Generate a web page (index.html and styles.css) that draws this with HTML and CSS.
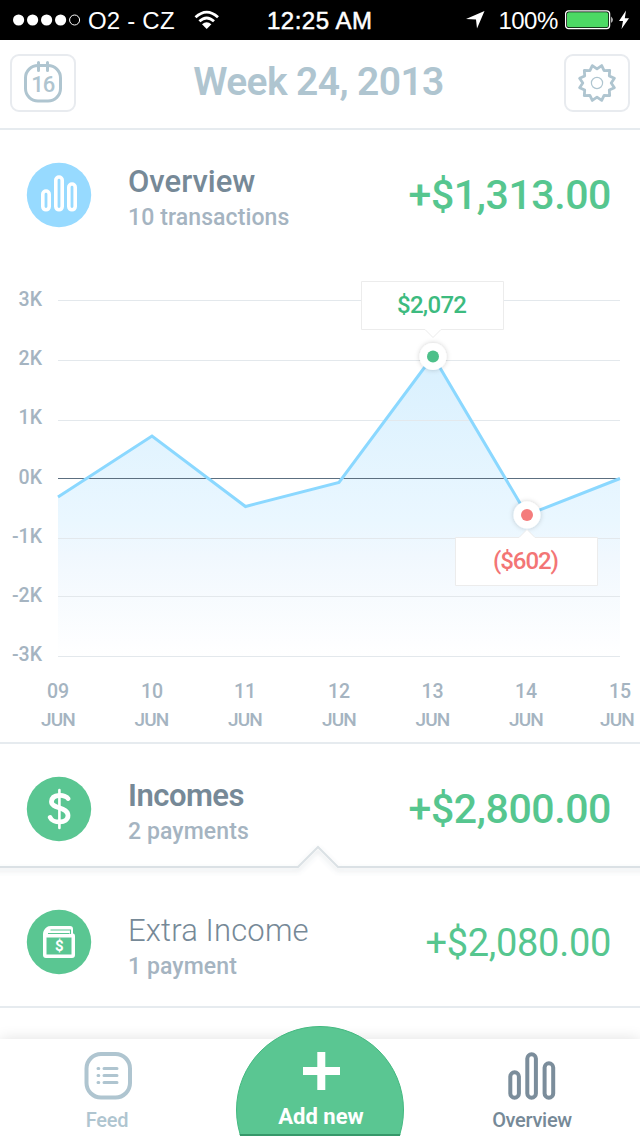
FILE: index.html
```html
<!DOCTYPE html>
<html lang="en">
<head>
<meta charset="utf-8">
<title>Week 24, 2013</title>
<link rel="stylesheet" href="styles.css">
</head>
<body>
<div class="status">
  <svg class="signal" width="68" height="12" viewBox="0 0 68 12"><g fill="#fff"><circle cx="5.6" cy="6" r="5.6"/><circle cx="19.6" cy="6" r="5.6"/><circle cx="33.6" cy="6" r="5.6"/><circle cx="47.6" cy="6" r="5.6"/></g><circle cx="61.6" cy="6" r="5" fill="none" stroke="#fff"/></svg>
  <span class="carrier">O2 - CZ</span>
  <svg class="wifi" width="26" height="20" viewBox="0 0 26 20"><g fill="none" stroke="#fff" stroke-width="2.8"><path d="M1.5 7.2Q12.7-3 24 7.2"/><path d="M5.4 11.3Q12.7 4.6 20 11.3"/></g><path d="M8 14.2Q12.7 10.2 17.4 14.2L12.7 19Z" fill="#fff"/></svg>
  <span class="clock">12:25 AM</span>
  <svg class="locate" width="20" height="20" viewBox="0 0 20 20"><path d="M18.5 1L11 18.5L10 9.5L0 9Z" fill="#fff"/></svg>
  <span class="percent">100%</span>
  <svg class="battery" width="65" height="20" viewBox="0 0 65 20"><rect x=".6" y=".8" width="44" height="17.8" rx="3" fill="none" stroke="#fff" stroke-width="1.3"/><rect x="2" y="2.2" width="41.2" height="15" rx="1.8" fill="#4cd964"/><path d="M46.3 6.5q2.8 3.3 0 6.6z" fill="#fff"/><path d="M61 .5L54 11h4L56.5 19L64 8.3h-4.2Z" fill="#fff"/></svg>
</div>

<header class="header">
  <div class="button">
    <svg width="40" height="44" viewBox="0 0 40 44" fill="none" stroke="#afc5d0" stroke-width="3"><rect x="2.5" y="4.500" width="35" height="35.500" rx="12.500"/><path d="M15.500 1.500v8M24.500 1.500v8" stroke-linecap="round"/><text class="date" x="19.700" y="31" text-anchor="middle">16</text></svg>
  </div>
  <h1 class="title">Week 24, 2013</h1>
  <div class="button">
    <svg width="40" height="40" viewBox="-20 -20 40 40" fill="none" stroke="#afc5d0"><path stroke-width="2.8" stroke-linejoin="round" d="M-4.7-17.4L0-14.2L4.7-17.4L7.1-12.3L12.7-12.7L12.3-7.1L17.4-4.7L14.2 0L17.4 4.7L12.3 7.1L12.7 12.7L7.1 12.3L4.7 17.4L0 14.2L-4.7 17.4L-7.1 12.3L-12.7 12.7L-12.3 7.1L-17.4 4.7L-14.2 0L-17.4-4.7L-12.3-7.1L-12.7-12.7L-7.1-12.3Z"/><circle r="5.6" stroke-width="1.2"/></svg>
  </div>
</header>

<main class="content">
  <section class="row overview">
    <svg class="badge" width="66" height="66" viewBox="0 0 66 66"><circle cx="33" cy="33" r="32.2" fill="#97daff"/><g fill="none" stroke="#fff" stroke-width="3.6"><rect x="16.8" y="29" width="6.4" height="18.8" rx="3.2"/><rect x="29.8" y="15" width="6.4" height="32.8" rx="3.2"/><rect x="42.8" y="22" width="6.4" height="25.8" rx="3.2"/></g></svg>
    <div class="info"><div class="name">Overview</div><div class="sub">10 transactions</div></div>
    <div class="amount">+$1,313.00</div>
  </section>

  <svg class="chart" width="640" height="484" viewBox="0 258 640 484">
    <defs>
      <linearGradient id="area" x1="0" y1="356" x2="0" y2="656" gradientUnits="userSpaceOnUse"><stop offset="0" stop-color="#d9f0fe"/><stop offset=".55" stop-color="#eaf7ff"/><stop offset=".67" stop-color="#f1f8fe"/><stop offset="1" stop-color="#fff"/></linearGradient>
      <filter id="soft" x="-50%" y="-50%" width="200%" height="200%"><feDropShadow dx="0" dy="0" stdDeviation="2.5" flood-color="#000" flood-opacity=".2"/></filter>
    </defs>
    <path d="M58 497L152 436L245.5 506.5L339 482.5L433 356L527 515L620 478.5V656H58Z" fill="url(#area)"/>
    <path d="M58 300.5H620M58 360.5H620M58 420.5H620M58 538.5H620M58 596.5H620M58 656.5H620" stroke="#e3e8ec"/>
    <path d="M58 478.5H620" stroke="#5c6f80"/>
    <path d="M58 497L152 436L245.5 506.5L339 482.5L433 356L527 515L620 478.5" fill="none" stroke="#8bd8ff" stroke-width="3"/>
    <circle cx="433" cy="356.5" r="13.5" fill="#fff" filter="url(#soft)"/><circle cx="433" cy="356.5" r="6" fill="#4dc08a"/>
    <circle cx="527" cy="515" r="13.5" fill="#fff" filter="url(#soft)"/><circle cx="527" cy="515" r="6" fill="#f47c7c"/>
    <path d="M361.5 281.5H503.5V329.5H441L433 337.5L425 329.5H361.5Z" fill="#fff" stroke="#ececec"/>
    <path d="M455.5 537.5H519L527 529.5L535 537.5H597.5V585.5H455.5Z" fill="#fff" stroke="#ececec"/>
    <text class="tip up" x="432" y="313" text-anchor="middle" textLength="70">$2,072</text>
    <text class="tip down" x="526" y="569" text-anchor="middle" textLength="66">($602)</text>
    <g class="axis" text-anchor="end">
      <text x="42" y="306">3K</text><text x="42" y="365">2K</text><text x="42" y="424">1K</text><text x="42" y="484">0K</text><text x="42" y="543">-1K</text><text x="42" y="602">-2K</text><text x="42" y="661">-3K</text>
    </g>
    <g class="axis" text-anchor="middle">
      <text x="58" y="698">09</text><text class="month" x="58" y="726">JUN</text>
      <text x="152" y="698">10</text><text class="month" x="151.500" y="726">JUN</text>
      <text x="245" y="698">11</text><text class="month" x="245" y="726">JUN</text>
      <text x="339" y="698">12</text><text class="month" x="339" y="726">JUN</text>
      <text x="432.5" y="698">13</text><text class="month" x="432.5" y="726">JUN</text>
      <text x="526" y="698">14</text><text class="month" x="526" y="726">JUN</text>
      <text x="620" y="698">15</text><text class="month" x="617" y="726">JUN</text>
    </g>
  </svg>

  <section class="row incomes">
    <svg class="badge" width="66" height="66" viewBox="0 0 66 66"><circle cx="33" cy="33" r="32.2" fill="#5ac692"/><path d="M42 22.5C40 18.5 26 17.5 25.5 25.5C25 33 42 30.5 42 39.5C42 48 26.500 47.500 24.200 41.500" fill="none" stroke="#fff" stroke-width="4.800" stroke-linecap="round"/><path d="M33.400 14v38" stroke="#fff" stroke-width="2.600" stroke-linecap="round"/></svg>
    <div class="info"><div class="name bold">Incomes</div><div class="sub">2 payments</div></div>
    <div class="amount">+$2,800.00</div>
    <svg class="notch" width="640" height="36" viewBox="0 0 640 36"><defs><filter id="under" x="-2%" y="-20%" width="104%" height="180%"><feDropShadow dx="0" dy="3" stdDeviation="2.5" flood-color="#5c6f80" flood-opacity=".22"/></filter></defs><path d="M-5 23H298L318 3L338 23H645" fill="none" stroke="#dbe1e5" stroke-width="2" filter="url(#under)"/></svg>
  </section>

  <section class="row extra">
    <svg class="badge" width="66" height="66" viewBox="0 0 66 66"><circle cx="33" cy="33" r="32.2" fill="#5ac692"/><path d="M17 49V25q0-4 4-7q1-1 4-1H44q3 0 3 3v4.500q2 0 2 3V46q0 3-3 3H20q-3 0-3-3Z" fill="#fff"/><path d="M20.500 28.500H45.500V45.500H20.500Z" fill="#5ac692"/><path d="M22 24.500H43.500M24.500 21H44.500V25" fill="none" stroke="#5ac692" stroke-width="1.100"/><text class="bill" x="33.300" y="42" text-anchor="middle">$</text></svg>
    <div class="info"><div class="name thin">Extra Income</div><div class="sub">1 payment</div></div>
    <div class="amount small">+$2,080.00</div>
  </section>
</main>

<nav class="tabs">
  <div class="tab feed">
    <svg width="48" height="48" viewBox="0 0 48 48" fill="none" stroke="#afc5d0" stroke-linecap="round"><rect x="2.500" y="2" width="43.500" height="43.500" rx="14.500" stroke-width="4"/><path d="M14 16.500h.8M20 16.500H33M14 23.500h.8M20 23.500H33M14 30.500h.8M20 30.500H33" stroke-width="3"/></svg>
    <span>Feed</span>
  </div>
  <div class="add">
    <svg width="168" height="110" viewBox="0 0 168 110"><defs><clipPath id="cut"><circle cx="84" cy="84" r="84"/></clipPath></defs><circle cx="84" cy="84" r="83.500" fill="#5ac692" stroke="#43b980"/><path d="M0 108h168v3H0z" fill="#36986a" clip-path="url(#cut)"/><path d="M85.300 26v38M67 45h37" stroke="#fff" stroke-width="8"/></svg>
    <span class="add-label">Add new</span>
  </div>
  <div class="tab active">
    <svg width="48" height="48" viewBox="0 0 48 48" fill="none" stroke="#7b8d9b" stroke-width="4"><rect x="2.300" y="20.300" width="8.600" height="25.400" rx="4.300"/><rect x="19.300" y="2.300" width="8.600" height="43.400" rx="4.300"/><rect x="36.600" y="11.300" width="8.600" height="34.400" rx="4.300"/></svg>
    <span>Overview</span>
  </div>
</nav>
</body>
</html>
```

FILE: styles.css
```css
* { box-sizing: border-box; }
body {
  margin: 0;
  width: 640px;
  height: 1136px;
  overflow: hidden;
  display: flex;
  flex-direction: column;
  background: #fff;
  font-family: Roboto, "Liberation Sans", sans-serif;
}
svg { display: block; flex: none; }

.status {
  height: 40px;
  flex: none;
  display: flex;
  align-items: center;
  padding: 0 11px 0 13px;
  background: #000;
  color: #fff;
  font: 24px/40px "Liberation Sans", Arial, sans-serif;
  white-space: nowrap;
}
.status span { padding-top: 1px; }
.carrier { width: 86px; margin-left: 7px; letter-spacing: .2px; }
.wifi { margin-left: 20px; }
.clock { width: 106px; margin-left: 47px; letter-spacing: .5px; -webkit-text-stroke: .5px #fff; }
.locate { margin-left: 94px; }
.percent { width: 59px; margin-left: 12px; letter-spacing: -.5px; }
.battery { margin-left: 8px; }

.header {
  height: 90px;
  flex: none;
  display: flex;
  justify-content: space-between;
  align-items: flex-start;
  padding: 14px 10px 0;
  border-bottom: 2px solid #e6ebef;
}
.button {
  width: 66px;
  height: 58px;
  border: 2px solid #e8ebef;
  border-radius: 9px;
  display: flex;
  justify-content: center;
  align-items: center;
}
.button text { fill: #afc5d0; stroke: none; }
.date { font-size: 22px; font-weight: 500; letter-spacing: -1px; }
.title {
  margin: 0 3px 0 0;
  font-size: 39px;
  font-weight: 600;
  line-height: 56px;
  letter-spacing: -.6px;
  color: #afc5d0;
}

.content { flex: 1; min-height: 0; }
.row {
  position: relative;
  display: flex;
  align-items: flex-start;
  padding: 0 29px 0 26px;
}
.overview { height: 128px; padding-top: 32px; }
.incomes { height: 124px; padding-top: 32px; border-top: 2px solid #e6ebef; }
.extra { height: 142px; padding-top: 43px; border-bottom: 2px solid #e6ebef; }
.info { width: 240px; margin-left: 36px; padding-top: 1px; }
.extra .info { padding-top: 3px; }
.name { font-size: 31px; line-height: 38px; font-weight: 500; color: #768997; white-space: nowrap; }
.name.bold { font-weight: 600; letter-spacing: -.5px; }
.name.thin { font-weight: 300; letter-spacing: .15px; }
.sub { font-size: 23px; line-height: 34px; font-weight: 500; letter-spacing: .1px; color: #a5b4c1; white-space: nowrap; }
.extra .sub { line-height: 33px; }
.amount {
  margin-left: auto;
  font-size: 41px;
  line-height: 66px;
  font-weight: 500;
  letter-spacing: -.4px;
  color: #56c68f;
}
.amount.small { padding-top: 1px; font-size: 38px; font-weight: 400; letter-spacing: -.3px; }
.notch { position: absolute; left: 0; top: 100px; }
.bill { font-size: 15px; font-weight: 700; fill: #fff; }

.axis { font-size: 19.5px; font-weight: 500; fill: #a5b4c1; }
.month { font-size: 19px; letter-spacing: -1px; }
.month { letter-spacing: -.8px; }
.tip { font-size: 24px; font-weight: 500; }
.up { fill: #3dbb7f; }
.down { fill: #f37575; }

.tabs {
  position: relative;
  height: 97px;
  flex: none;
  display: flex;
  justify-content: space-between;
  padding: 13px 48px 0 47px;
  background: #fff;
  box-shadow: 0 0 14px rgba(0, 0, 0, .12);
}
.tab {
  width: 120px;
  display: flex;
  flex-direction: column;
  align-items: center;
  font-size: 20px;
  line-height: 40px;
  font-weight: 500;
  letter-spacing: -.3px;
  color: #afc5d0;
}
.feed svg { margin-left: 2px; }
.tab.active { color: #768997; }
.add { position: absolute; left: 236px; top: -13px; }
.add-label {
  position: absolute;
  inset: 77px 0 auto 2px;
  text-align: center;
  color: #fff;
  font-size: 22px;
  line-height: 28px;
  font-weight: 700;
}
```
